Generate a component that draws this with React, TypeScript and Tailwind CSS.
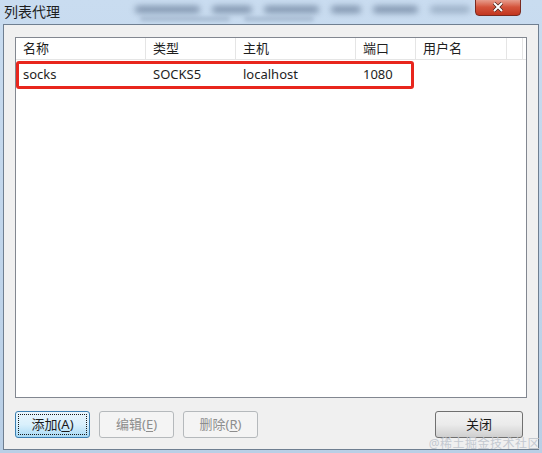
import React from "react";

const font = { fontFamily: '"Segoe UI", "Noto Sans", "Noto Sans CJK SC", sans-serif' };

const columns = [
    { name: "名称", w: "w-[130px]" },
    { name: "类型", w: "w-[90px]" },
    { name: "主机", w: "w-[120px]" },
    { name: "端口", w: "w-[60px]" },
    { name: "用户名", w: "w-[91px]" },
];

const row = ["socks", "SOCKS5", "localhost", "1080", ""];

function Btn({ label, hot, focused, disabled, className }: { label: string; hot: string; focused?: boolean; disabled?: boolean; className?: string }) {
    const base = focused
        ? "border-[#3c7fb1] bg-gradient-to-b from-[#eaf6fd] via-[#d9f0fc] to-[#a7d9f5] text-[#1a1a1a]"
        : disabled
            ? "border-[#b5b9bc] bg-[#f4f4f4] text-[#8d8d8d]"
            : "border-[#707070] bg-gradient-to-b from-[#f2f2f2] via-[#ebebeb] to-[#cfcfcf] text-[#1a1a1a]";
    return (
        <div className={`h-[27px] rounded-[3px] border p-[2px] ${base} ${className}`}>
            <div className={`h-full flex items-center justify-center text-[13px] ${focused ? "border border-dotted border-[#1a1a1a]" : ""}`}>
                {label}
                {hot && (
                    <span>
                        (<span className="underline underline-offset-2">{hot}</span>)
                    </span>
                )}
            </div>
        </div>
    );
}

export default function App() {
    return (
        <div className="w-[542px] h-[453px] relative overflow-hidden bg-gradient-to-b from-[#c9dcf0] to-[#b9cfe6]" style={font}>
            {/* title bar */}
            <div className="h-[24px] flex items-center pl-[4px] relative">
                <span className="text-[14px] text-[#1e1e1e] leading-none z-10">列表代理</span>
                <div className="absolute left-[135px] top-[6px] flex gap-[12px] blur-[3px] opacity-60">
                    <div className="w-[65px] h-[7px] rounded bg-[#4e6380]" />
                    <div className="w-[40px] h-[7px] rounded bg-[#4e6380]" />
                    <div className="w-[55px] h-[7px] rounded bg-[#4e6380]" />
                    <div className="w-[30px] h-[7px] rounded bg-[#4e6380]" />
                    <div className="w-[45px] h-[7px] rounded bg-[#4e6380]" />
                    <div className="w-[40px] h-[7px] rounded bg-[#7a8fa8]" />
                </div>
                <div className="absolute left-[140px] top-[17px] flex gap-[14px] blur-[2px] opacity-40">
                    <div className="w-[90px] h-[4px] rounded bg-[#6a7f9a]" />
                    <div className="w-[70px] h-[4px] rounded bg-[#6a7f9a]" />
                </div>
            </div>
            <div className="absolute left-[475px] top-[-2px] w-[46px] h-[18px] rounded-b-[4px] border border-[#7a2a20] bg-gradient-to-b from-[#e8a597] via-[#d4543c] to-[#c2351f] flex items-center justify-center">
                <svg width="12" height="10" viewBox="0 0 12 10">
                    <path d="M2 1 L10 9 M10 1 L2 9" stroke="#3b1a14" strokeWidth="3.2" />
                    <path d="M2 1 L10 9 M10 1 L2 9" stroke="#ffffff" strokeWidth="2" />
                </svg>
            </div>

            {/* dialog body */}
            <div className="absolute left-[3px] top-[24px] w-[536px] h-[426px] border border-[#6f7f91] bg-[#f0f0f0] flex flex-col pt-[12px] px-[11px]">
                <div className="h-[361px] border border-[#828790] bg-white flex flex-col">
                    <div className="h-[22px] flex border-b border-[#e5e5e5] text-[13px] text-[#1e1e1e]">
                        {columns.map((c) => (
                            <div key={c.name} className={`${c.w} shrink-0 pl-[7px] border-r border-[#e5e5e5] flex items-center`}>
                                {c.name}
                            </div>
                        ))}
                        <div className="w-[16px] shrink-0 border-r border-[#e5e5e5]" />
                    </div>
                    <div className="h-[29px] flex text-[13px] text-[#1e1e1e] relative">
                        {row.map((v, i) => (
                            <div key={i} className={`${columns[i].w} shrink-0 pl-[7px] flex items-center`}>
                                {v}
                            </div>
                        ))}
                        <div className="absolute left-0 top-[1px] w-[398px] h-[28px] border-[3px] border-[#e8261d] rounded-[3px]" />
                    </div>
                </div>
                <div className="flex mt-[13px] items-center">
                    <Btn label="添加" hot="A" focused className="w-[75px]" />
                    <Btn label="编辑" hot="E" disabled className="w-[75px] ml-[9px]" />
                    <Btn label="删除" hot="R" disabled className="w-[75px] ml-[9px]" />
                    <Btn label="关闭" hot="" className="w-[88px] ml-[177px]" />
                </div>
            </div>
            <div className="absolute right-[2px] bottom-[2px] text-[12px] text-[#c4c9d0] leading-[14px] tracking-[0.5px]">@稀土掘金技术社区</div>
        </div>
    );
}
